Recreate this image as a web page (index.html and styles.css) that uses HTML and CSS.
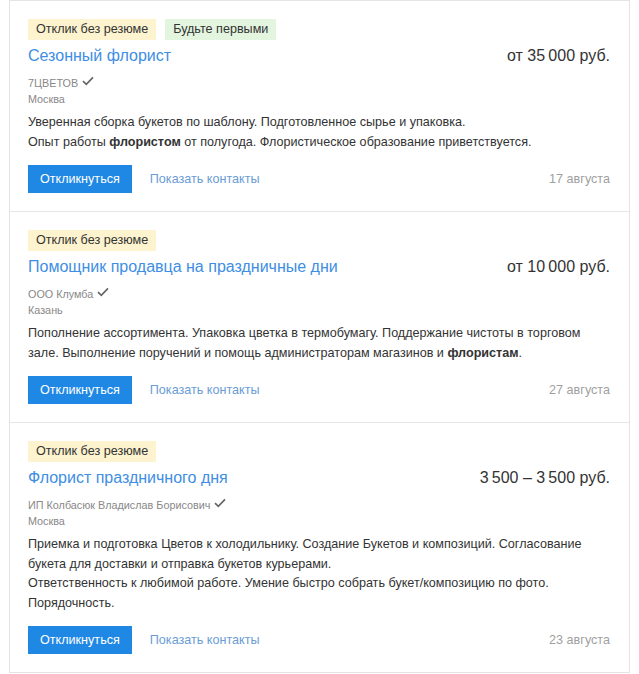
FILE: index.html
```html
<!DOCTYPE html>
<html lang="ru">
<head>
<meta charset="utf-8">
<title>Вакансии</title>
<link rel="stylesheet" href="styles.css">
</head>
<body>
<div class="list">
  <div class="card">
    <div class="badges">
      <span class="badge badge-yellow">Отклик без резюме</span>
      <span class="badge badge-green">Будьте первыми</span>
    </div>
    <div class="head">
      <a class="title" href="#">Сезонный флорист</a>
      <span class="price">от 35&#8239;000 руб.</span>
    </div>
    <div class="company">7ЦВЕТОВ <svg class="check" width="12" height="10" viewBox="0 0 12 10"><path d="M1 5.2 L4.3 8.3 L11 1.3" fill="none" stroke="#666" stroke-width="1.7"/></svg></div>
    <div class="city">Москва</div>
    <p class="desc">Уверенная сборка букетов по шаблону. Подготовленное сырье и упаковка.<br>Опыт работы <b>флористом</b> от полугода. Флористическое образование приветствуется.</p>
    <div class="actions">
      <button class="btn">Откликнуться</button>
      <a class="contacts" href="#">Показать контакты</a>
      <span class="date">17 августа</span>
    </div>
  </div>
  <div class="card">
    <div class="badges">
      <span class="badge badge-yellow">Отклик без резюме</span>
    </div>
    <div class="head">
      <a class="title" href="#">Помощник продавца на праздничные дни</a>
      <span class="price">от 10&#8239;000 руб.</span>
    </div>
    <div class="company">ООО Клумба <svg class="check" width="12" height="10" viewBox="0 0 12 10"><path d="M1 5.2 L4.3 8.3 L11 1.3" fill="none" stroke="#666" stroke-width="1.7"/></svg></div>
    <div class="city">Казань</div>
    <p class="desc">Пополнение ассортимента. Упаковка цветка в термобумагу. Поддержание чистоты в торговом зале. Выполнение поручений и помощь администраторам магазинов и <b>флористам</b>.</p>
    <div class="actions">
      <button class="btn">Откликнуться</button>
      <a class="contacts" href="#">Показать контакты</a>
      <span class="date">27 августа</span>
    </div>
  </div>
  <div class="card">
    <div class="badges">
      <span class="badge badge-yellow">Отклик без резюме</span>
    </div>
    <div class="head">
      <a class="title" href="#">Флорист праздничного дня</a>
      <span class="price">3&#8239;500 – 3&#8239;500 руб.</span>
    </div>
    <div class="company">ИП Колбасюк Владислав Борисович <svg class="check" width="12" height="10" viewBox="0 0 12 10"><path d="M1 5.2 L4.3 8.3 L11 1.3" fill="none" stroke="#666" stroke-width="1.7"/></svg></div>
    <div class="city">Москва</div>
    <p class="desc">Приемка и подготовка Цветов к холодильнику. Создание Букетов и композиций. Согласование букета для доставки и отправка букетов курьерами.<br>Ответственность к любимой работе. Умение быстро собрать букет/композицию по фото. Порядочность.</p>
    <div class="actions">
      <button class="btn">Откликнуться</button>
      <a class="contacts" href="#">Показать контакты</a>
      <span class="date">23 августа</span>
    </div>
  </div>
</div>
</body>
</html>
```
FILE: styles.css
```css
html, body {
  margin: 0;
  padding: 0;
  background: #fff;
}
body {
  font-family: "Liberation Sans", Arial, sans-serif;
  color: #333;
}
.list {
  margin: 0 9px 0 9px;
  border: 1px solid #e4e4e4;
  background: #fff;
}
.card {
  padding: 18px 19px 18px 18px;
  border-bottom: 1px solid #e6e6e6;
}
.card:last-child {
  border-bottom: none;
}
.badges {
  display: flex;
  gap: 9px;
  height: 21px;
}
.badge {
  display: inline-block;
  font-size: 12.6px;
  line-height: 21px;
  height: 21px;
  padding: 0 8px;
  color: #333;
}
.badge-yellow {
  background: #fdf3cf;
}
.badge-green {
  background: #e3f5df;
}
.head {
  display: flex;
  justify-content: space-between;
  align-items: baseline;
  margin-top: 5px;
  line-height: 22px;
}
.title {
  font-size: 16px;
  color: #3e8ee3;
  text-decoration: none;
}
.price {
  font-size: 16px;
  color: #333;
}
.company {
  margin-top: 8px;
  font-size: 10.8px;
  line-height: 16px;
  color: #888;
  display: flex;
  align-items: center;
  gap: 4px;
}
.check {
  margin-top: -4px;
}
.city {
  font-size: 10.8px;
  line-height: 16px;
  color: #888;
}
.desc {
  margin: 6px 0 0 0;
  font-size: 12.6px;
  line-height: 19.5px;
  color: #333;
}
.desc b {
  font-weight: bold;
}
.actions {
  display: flex;
  align-items: center;
  margin-top: 13px;
  height: 28px;
}
.btn {
  height: 28px;
  padding: 0 12px;
  border: none;
  border-radius: 0;
  background: #1f88e5;
  color: #fff;
  font-family: "Liberation Sans", Arial, sans-serif;
  font-size: 12.6px;
  cursor: pointer;
}
.contacts {
  margin-left: 18px;
  font-size: 12.6px;
  color: #6a9cd6;
  text-decoration: none;
}
.date {
  margin-left: auto;
  font-size: 12.6px;
  color: #a0a0a0;
}
```
